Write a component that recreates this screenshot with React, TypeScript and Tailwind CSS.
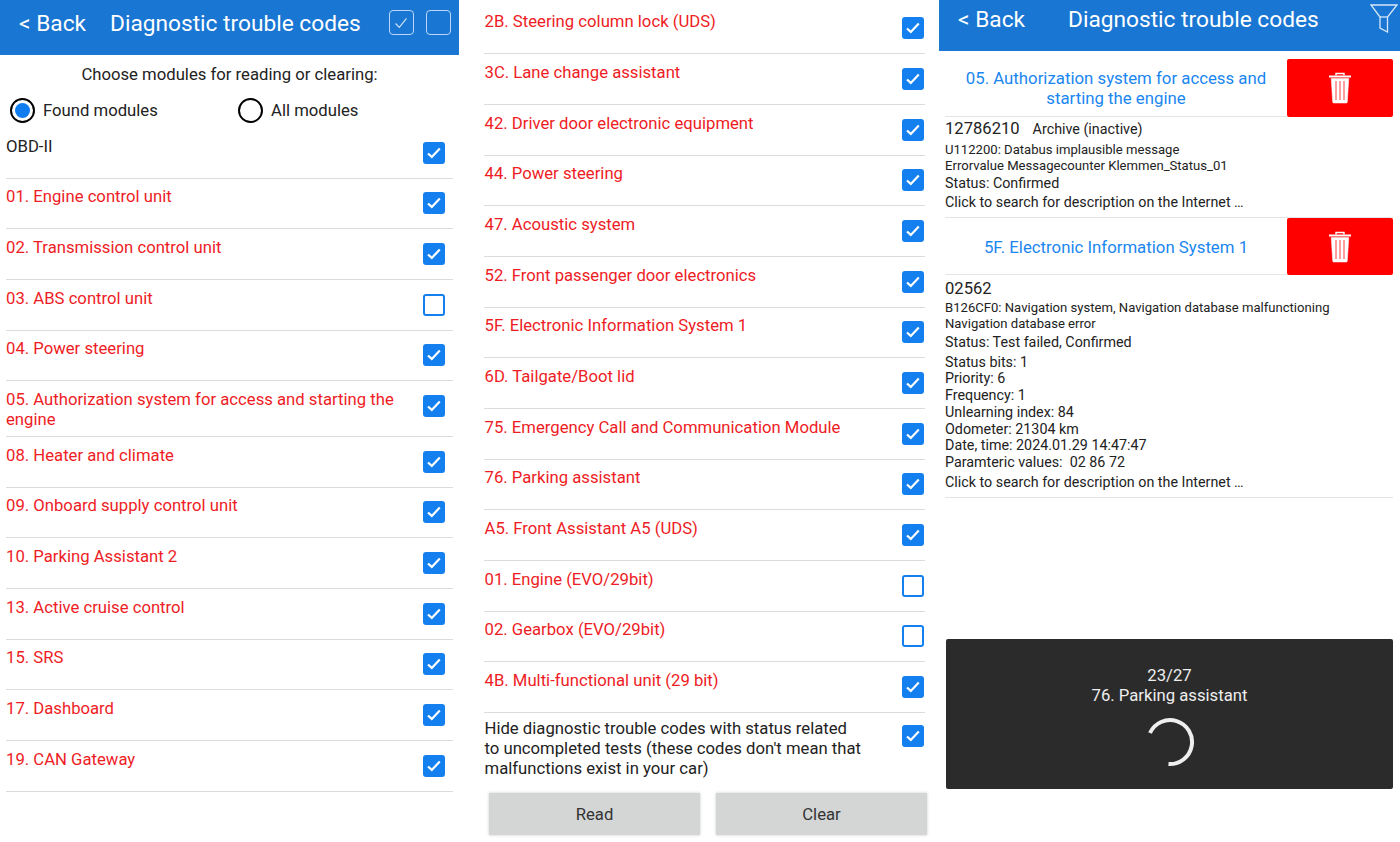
const FIRST = [
  "01. Engine control unit",
  "02. Transmission control unit",
  "03. ABS control unit",
  "04. Power steering",
  "05. Authorization system for access and starting the engine",
  "08. Heater and climate",
  "09. Onboard supply control unit",
  "10. Parking Assistant 2",
  "13. Active cruise control",
  "15. SRS",
  "17. Dashboard",
  "19. CAN Gateway",
];

const SECOND = [
  "2B. Steering column lock (UDS)",
  "3C. Lane change assistant",
  "42. Driver door electronic equipment",
  "44. Power steering",
  "47. Acoustic system",
  "52. Front passenger door electronics",
  "5F. Electronic Information System 1",
  "6D. Tailgate/Boot lid",
  "75. Emergency Call and Communication Module",
  "76. Parking assistant",
  "A5. Front Assistant A5 (UDS)",
  "01. Engine (EVO/29bit)",
  "02. Gearbox (EVO/29bit)",
  "4B. Multi-functional unit (29 bit)",
];

const UNCHECKED = ["03. ABS control unit", "01. Engine (EVO/29bit)", "02. Gearbox (EVO/29bit)"];

function Check({ on = true }: { on?: boolean }) {
  if (!on) return <div className="h-[22px] w-[22px] rounded-[3px] border-2 border-[#147fee] bg-white" />;
  return (
    <div className="flex h-[22px] w-[22px] items-center justify-center rounded-[3px] bg-[#147fee]">
      <svg width="16" height="16" viewBox="0 0 16 16" fill="none" stroke="white" strokeWidth="2.2">
        <path d="M2 8.5l3.8 3.4 8-8.4" />
      </svg>
    </div>
  );
}

function Row({ label, black = false, tight = false }: { label: string; black?: boolean; tight?: boolean }) {
  const two = label.length > 50;
  return (
    <div className={`flex justify-between border-b border-[#dcdcdc] pt-[8.7px] ${two ? "h-[55.5px]" : "h-[50.7px]"}`}>
      <div className={`w-[400px] text-[16.7px] leading-[20px] ${tight ? "pl-[0.5px]" : ""} ${black ? "text-[#222]" : "text-[#ee1c25]"}`}>{label}</div>
      <div className={`mt-[5px] ${tight ? "mr-[1px]" : "mr-[8px]"}`}>
        <Check on={!UNCHECKED.includes(label)} />
      </div>
    </div>
  );
}

function Header({ wide = false }: { wide?: boolean }) {
  return (
    <div className={`flex shrink-0 bg-[#1976d2] text-white ${wide ? "h-[51px] pt-[6px]" : "h-[55px] pt-[10px]"}`}>
      <div className="ml-[19px] text-[22.7px] leading-[28px]">&lt; Back</div>
      <div className={`text-[22.7px] leading-[28px] ${wide ? "ml-[43px]" : "ml-[24px]"}`}>Diagnostic trouble codes</div>
      {wide ? (
        <svg className="ml-[51px] -mt-[3px]" width="28" height="30" viewBox="0 0 28 30" fill="none" stroke="#d6e6f7" strokeWidth="1.3">
          <path d="M1 2h26L17.5 14v15L10 25V14z" />
          <path d="M10 14h7.5" />
        </svg>
      ) : (
        <div className="ml-[28px] flex gap-[12px]">
          <div className="flex h-[25px] w-[25px] items-center justify-center rounded-[4px] border border-[#b9d6f2]">
            <svg width="16" height="16" viewBox="0 0 16 16" fill="none" stroke="#cfe2f6" strokeWidth="1.2">
              <path d="M2.5 8.5l3.8 3.8 7.2-9" />
            </svg>
          </div>
          <div className="h-[25px] w-[25px] rounded-[4px] border border-[#b9d6f2]" />
        </div>
      )}
    </div>
  );
}

function Radio({ on = false, label }: { on?: boolean; label: string }) {
  return (
    <div className="flex items-center gap-[8px]">
      <div className="flex h-[25px] w-[25px] items-center justify-center rounded-full border-2 border-black">
        {on && <div className="h-[15px] w-[15px] rounded-full bg-[#0f7df0]" />}
      </div>
      <span className="text-[16.7px] text-[#222]">{label}</span>
    </div>
  );
}

function Trash() {
  return (
    <svg width="24" height="32" viewBox="0 0 24 32" fill="none" stroke="white">
      <path d="M8 3.5V1.5h8v2" strokeWidth="1.4" />
      <path d="M1 4.5h22" strokeWidth="2" />
      <path d="M3.2 6.5l1.5 23.5q.1 1 1 1h12.6q.9 0 1-1l1.5-23.5z" fill="white" strokeWidth="0.5" />
      <path d="M8 9v19M12 9v19M16 9v19" stroke="#ff4040" strokeWidth="1" />
    </svg>
  );
}

function ModuleTitle({ h, children }: { h: string; children: React.ReactNode }) {
  return (
    <div className="flex">
      <div className={`flex w-[342px] items-center justify-center border-b border-[#e4e4e4] pt-[1px] text-center text-[16.8px] leading-[20px] text-[#1a86f0] ${h}`}>
        {children}
      </div>
      <div className={`flex w-[106px] items-center justify-center rounded-[2px] bg-[#fe0000] ${h}`}>
        <Trash />
      </div>
    </div>
  );
}

export default function App() {
  return (
    <div className="flex h-[842px] w-[1400px] overflow-hidden bg-white font-['Roboto',sans-serif]">
      {/* found modules */}
      <div className="w-[459px] shrink-0">
        <Header />
        <div className="mt-[10px] text-center text-[16.7px] leading-[20px] text-[#222]">Choose modules for reading or clearing:</div>
        <div className="mt-[13px] flex pl-[10px]">
          <div className="w-[228px]">
            <Radio on label="Found modules" />
          </div>
          <Radio label="All modules" />
        </div>
        <div className="mx-[6px] mt-[5px]">
          <Row label="OBD-II" black />
          {FIRST.map((m) => (
            <Row key={m} label={m} />
          ))}
        </div>
      </div>

      {/* module list continued */}
      <div className="ml-[25px] flex w-[441px] shrink-0 flex-col">
        <div className="h-[3.5px]" />
        {SECOND.map((m) => (
          <Row key={m} label={m} tight />
        ))}
        <div className="flex justify-between pt-[5.5px]">
          <div className="pl-[0.5px] text-[16.7px] leading-[20px] text-[#222]">
            Hide diagnostic trouble codes with status related<br />
            to uncompleted tests (these codes don't mean that<br />
            malfunctions exist in your car)
          </div>
          <div className="mr-[1px] mt-[6px]">
            <Check />
          </div>
        </div>
        <div className="mt-[14.5px] flex gap-[16px] pl-[5px]">
          <div className="flex h-[42px] w-[211px] shrink-0 items-center justify-center bg-[#d4d6d6] pt-[1px] text-[16.7px] text-[#333] shadow-[0_0_3px_rgba(0,0,0,0.2)]">Read</div>
          <div className="flex h-[42px] w-[211px] shrink-0 items-center justify-center bg-[#d4d6d6] pt-[1px] text-[16.7px] text-[#333] shadow-[0_0_3px_rgba(0,0,0,0.2)]">Clear</div>
        </div>
      </div>

      {/* results */}
      <div className="ml-[14px] flex w-[461px] shrink-0 flex-col">
        <Header wide />
        <div className="ml-[6px] mt-[8px]">
          <ModuleTitle h="h-[58px]">
            <span>05. Authorization system for access and<br />starting the engine</span>
          </ModuleTitle>
          <div className="h-[101px] w-[448px] border-b border-[#e4e4e4] text-[#222]">
            <div className="flex items-baseline pt-[1px]">
              <span className="text-[16.6px] leading-[22px]">12786210</span>
              <span className="ml-[13px] text-[14.3px] leading-[22px]">Archive (inactive)</span>
            </div>
            <div className="mt-[2px] text-[13.1px] leading-[15.5px]">
              U112200: Databus implausible message<br />Errorvalue Messagecounter Klemmen_Status_01
            </div>
            <div className="mt-[1px] text-[14.3px] leading-[19px]">Status: Confirmed</div>
            <div className="text-[14.3px] leading-[19px]">Click to search for description on the Internet …</div>
          </div>
          <ModuleTitle h="h-[57px]">5F. Electronic Information System 1</ModuleTitle>
          <div className="h-[223px] w-[448px] border-b border-[#e4e4e4] text-[#222]">
            <div className="pt-[2.5px] text-[16.6px] leading-[22px]">02562</div>
            <div className="mt-[0.5px] text-[13.1px] leading-[15.5px]">
              B126CF0: Navigation system, Navigation database malfunctioning<br />Navigation database error
            </div>
            <div className="mt-[2px] text-[14.3px] leading-[19px]">Status: Test failed, Confirmed</div>
            <div className="mt-[1.5px] text-[14.3px] leading-[16.8px]">
              <div>Status bits: 1</div>
              <div>Priority: 6</div>
              <div>Frequency: 1</div>
              <div>Unlearning index: 84</div>
              <div>Odometer: 21304 km</div>
              <div>Date, time: 2024.01.29 14:47:47</div>
              <div>Paramteric values:&nbsp; 02 86 72</div>
            </div>
            <div className="mt-[1.5px] text-[14.3px] leading-[19px]">Click to search for description on the Internet …</div>
          </div>
        </div>
        <div className="ml-[7px] mt-auto mb-[53px] flex h-[150px] w-[447px] flex-col items-center rounded-[2px] bg-[#2b2b2b] pt-[27px] text-[#eee]">
          <div className="text-[16.7px] leading-[20px]">23/27</div>
          <div className="text-[16.7px] leading-[20px]">76. Parking assistant</div>
          <svg className="mt-[11px]" width="50" height="50" viewBox="0 0 50 50" fill="none" stroke="#eee" strokeWidth="4">
            <path d="M5 16A22 22 0 1 1 23.5 47" />
          </svg>
        </div>
      </div>
    </div>
  );
}
